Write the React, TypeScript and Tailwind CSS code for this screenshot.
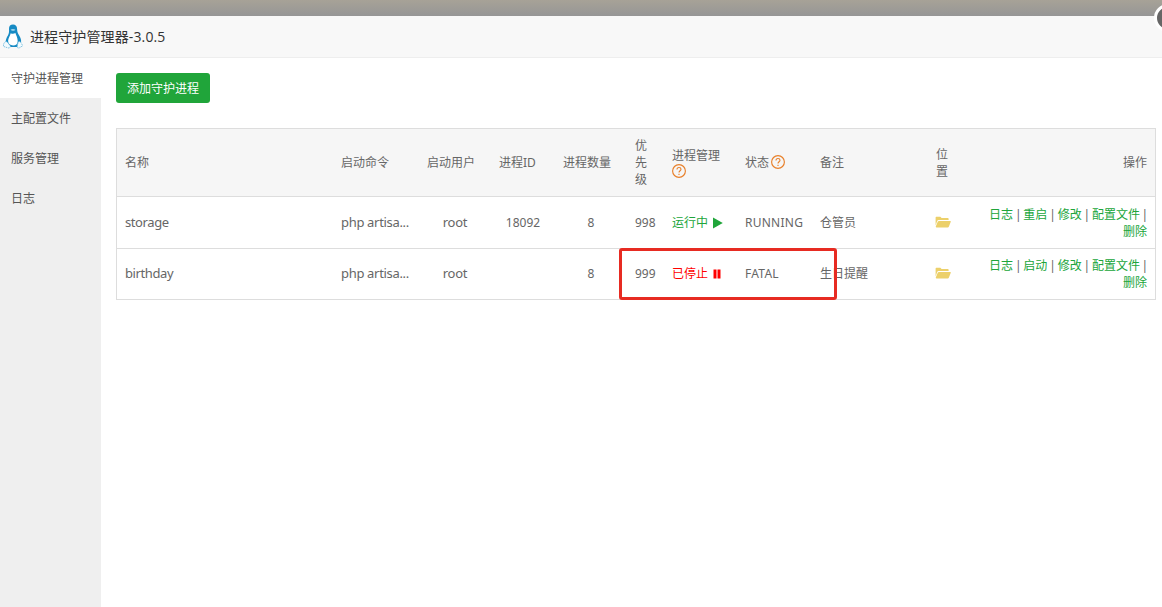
import React from 'react';

const cols =
  'grid grid-cols-[216px_86px_72px_64px_72px_37px_73px_75px_116px_31px_1fr] items-center';

const processes = [
  { name: 'storage', command: 'php artisa...', user: 'root', pid: '18092', count: 8, priority: 998, running: true, status: 'RUNNING', remark: '仓管员' },
  { name: 'birthday', command: 'php artisa...', user: 'root', pid: '', count: 8, priority: 999, running: false, status: 'FATAL', remark: '生日提醒' },
];

const menu = ['守护进程管理', '主配置文件', '服务管理', '日志'];

function Penguin() {
  return (
    <svg width="20" height="25" viewBox="0 0 20 25" className="shrink-0">
      <path d="M6 5C5.900 1.800 7.500.4 10 .4s4.100 1.500 4.100 4.600c0 3 .8 4.400 2.100 6.500 1.400 2.300 2.300 4.500 1.800 7L14.500 23H7L2.700 18c0-2.500.9-4.300 2.200-6.500C6 9.500 6.200 7.500 6 5z" fill="#178bc4" />
      <path d="M7.700 9.200c1.500.8 3.200.8 4.700-.2.6 2 2.300 4.800 2.300 8 0 3-1.900 4.500-4.600 4.500-3 0-5-1.700-5-4.400 0-3.100 2.200-5.400 2.600-7.900z" fill="#fff" />
      <path d="M7.600 5.700c1-.9 3.500-1 4.800.1-.8 1.300-3.600 1.500-4.800-.1z" fill="#a6d8ee" />
      <path d="M2.700 17.500c1.600-.3 3 2.500 4.500 4.200.8 1.500-.8 2.700-2.500 2.100L.7 22.500c-.8-.4 0-1.500-.1-2.700 0-1 1.300-.6 2.100-2.300zM16.700 17.600c-1.400-.4-2 1.400-2.200 3.200-.4 1.700-.4 3.200 1 3.200 1.300.1 2-1.200 3.600-1.800 1-.6.400-1.200-.2-1.900-.5-.8-.8-2.200-2.200-2.700z" fill="#f2fafd" stroke="#65b5dc" strokeWidth=".8" strokeDasharray="1.500 .7" />
    </svg>
  );
}

function Help() {
  return (
    <svg width="14" height="14" viewBox="0 0 14 14" fill="none" stroke="#e8802b" className="shrink-0">
      <circle cx="7" cy="7" r="6.400" strokeWidth="1.150" />
      <path d="M5 5.500C5 4.200 5.800 3.500 7 3.500s2 .7 2 1.800C9 6.700 7 6.800 7 8.500M7 9.700v1.200" strokeWidth="1.100" />
    </svg>
  );
}

function Folder() {
  return (
    <svg width="16" height="12" viewBox="0 0 16 12" fill="#ecd06a" className="-ml-px mb-px">
      <path d="M.6 9.500V1.700C.6 1 1 .7 1.600.7h3.800l1.200 1.400h6c.7 0 1 .4 1 1v1H3.700c-.8 0-1.200.4-1.500 1z" />
      <path d="M3.900 4.900h11.300c.6 0 .8.300.6.800l-2 5c-.2.500-.5.700-1 .7H1.400c-.6 0-.8-.3-.6-.8l2-5c.2-.5.5-.7 1.100-.7z" />
    </svg>
  );
}

function Link({ children }: { children: React.ReactNode }) {
  return <a className="cursor-pointer text-[#20a53a]">{children}</a>;
}

function Sep() {
  return <span className="w-[10.300px] text-center">|</span>;
}

export default function App() {
  return (
    <div className="relative flex h-[607px] w-[1162px] flex-col overflow-hidden bg-white font-['Noto_Sans','Noto_Sans_CJK_SC',sans-serif] text-[12px] text-[#666]">
      <div className="h-4 shrink-0 bg-linear-to-b from-[#a7a297] to-[#969696]" />
      <header className="flex h-[42px] shrink-0 items-center border-b border-[#eee] bg-[#f8f8f8] pl-[3px]">
        <Penguin />
        <h1 className="ml-[7px] font-['Open_Sans','Noto_Sans_CJK_SC',sans-serif] text-[14px] leading-5 tracking-[0.120px] text-[#333]">进程守护管理器-3.0.5</h1>
      </header>
      <div className="absolute -right-[21px] top-[4px] h-[28px] w-[29px] rounded-full border-[3px] border-white bg-[#666]" />
      <div className="flex min-h-0 grow">
        <nav className="w-[101px] shrink-0 bg-[#efefef] text-[#555]">
          {menu.map((item, i) => (
            <div key={item} className={`flex h-10 items-center pl-[11px] pt-0.5 ${i === 0 ? 'bg-white' : ''}`}>{item}</div>
          ))}
        </nav>
        <main className="grow pl-[15px] pr-[6px] pt-[15px]">
          <button className="flex h-[30px] w-[94px] items-center justify-center rounded-[3px] bg-[#20a53a] pt-0.5 text-white">添加守护进程</button>
          <div className="relative mt-[25px] border border-[#ddd] leading-[17px]">
            <div className={`${cols} h-[68px] border-b border-[#ddd] bg-[#f6f6f6]`}>
              <div className="px-2">名称</div>
              <div className="px-2">启动命令</div>
              <div className="px-2">启动用户</div>
              <div className="px-2">进程ID</div>
              <div className="px-2">进程数量</div>
              <div className="w-7 pl-2">优先级</div>
              <div className="px-2">进程管理<Help /></div>
              <div className="flex items-center whitespace-nowrap pl-2 pr-1">
                <span className="mr-0.5">状态</span><span className="-mt-0.5"><Help /></span>
              </div>
              <div className="px-2">备注</div>
              <div className="w-7 pl-2">位置</div>
              <div className="px-2 text-right">操作</div>
            </div>
            {processes.map((p, i) => (
              <div key={p.name} className={`${cols} ${i === 0 ? 'h-[52px] border-b border-[#ddd]' : 'h-[50px] *:-mt-px'}`}>
                <div className="px-2 text-[13px] tracking-[-0.400px]">{p.name}</div>
                <div className="whitespace-nowrap pl-2 text-[13px] tracking-[-0.320px]">{p.command}</div>
                <div className="text-center text-[13px] tracking-[-0.250px]">{p.user}</div>
                <div className="text-center">{p.pid}</div>
                <div className="text-center">{p.count}</div>
                <div className="pl-2">{p.priority}</div>
                <div className={`flex items-center whitespace-nowrap pl-2 ${p.running ? 'text-[#20a53a]' : 'text-[red]'}`}>
                  <span className="mr-[5px]">{p.running ? '运行中' : '已停止'}</span>
                  <svg width="10" height="12" viewBox="0 0 10 12" fill="currentColor">
                    <path d={p.running ? 'M0 .500 9.800 6 0 11.500z' : 'M.500 1.500h3v9h-3zM4.500 1.500h3v9h-3z'} />
                  </svg>
                </div>
                <div className="pl-2 tracking-[0.250px]">{p.status}</div>
                <div className="px-2">{p.remark}</div>
                <div className="pl-2"><Folder /></div>
                <div className="whitespace-nowrap pr-2">
                  <div className="flex justify-end">
                    <Link>日志</Link><Sep /><Link>{p.running ? '重启' : '启动'}</Link><Sep /><Link>修改</Link><Sep /><Link>配置文件</Link>
                    <span className="-mr-px w-2 text-right">|</span>
                  </div>
                  <div className="text-right"><Link>删除</Link></div>
                </div>
              </div>
            ))}
            <div className="pointer-events-none absolute left-[502px] top-[119px] h-[52px] w-[218px] rounded-[3px] border-[3px] border-[#e72b22]" />
          </div>
        </main>
      </div>
    </div>
  );
}
